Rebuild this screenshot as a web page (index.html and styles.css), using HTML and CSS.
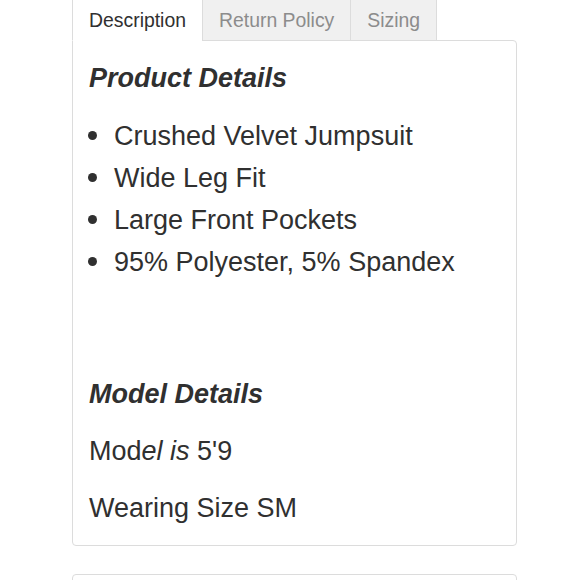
FILE: index.html
```html
<!DOCTYPE html>
<html>
<head>
<meta charset="utf-8">
<link rel="stylesheet" href="styles.css">
</head>
<body>
<div class="wrap">
  <div class="tabs">
    <div class="tab active">Description</div>
    <div class="tab">Return Policy</div>
    <div class="tab last">Sizing</div>
  </div>
  <div class="panel">
    <h2 class="heading">Product Details</h2>
    <ul class="list">
      <li>Crushed Velvet Jumpsuit</li>
      <li>Wide Leg Fit</li>
      <li>Large Front Pockets</li>
      <li>95% Polyester, 5% Spandex</li>
    </ul>
    <h2 class="heading model">Model Details</h2>
    <p class="para">Mod<em>el is</em> 5'9</p>
    <p class="para">Wearing Size SM</p>
  </div>
  <div class="panel next"></div>
</div>
</body>
</html>
```
FILE: styles.css
```css
html, body {
  margin: 0;
  padding: 0;
  background: #fff;
}
body {
  font-family: "Liberation Sans", Arial, Helvetica, sans-serif;
  color: #303030;
  overflow: hidden;
}
.wrap {
  margin-left: 72px;
  width: 445px;
}
.tabs {
  display: flex;
  height: 41px;
}
.tab {
  box-sizing: border-box;
  height: 41px;
  padding: 10px 16px 10px 16px;
  font-size: 19.4px;
  line-height: 20px;
  color: #8c8c8c;
  background: #f0f0f0;
  border-left: 1px solid #dcdcdc;
  border-bottom: 1px solid #dcdcdc;
  position: relative;
  z-index: 1;
}
.tab.last {
  border-right: 1px solid #dcdcdc;
}
.tab.active {
  background: #fff;
  color: #303030;
  border-bottom-color: #fff;
}
.panel {
  margin-top: -1px;
  border: 1px solid #dcdcdc;
  border-radius: 0 4px 4px 4px;
  padding: 21px 16px 21px 16px;
}
.heading {
  margin: 0;
  font-size: 27px;
  line-height: 32px;
  font-weight: bold;
  font-style: italic;
}
.list {
  list-style: none;
  margin: 21px 0 0 0;
  padding: 0;
}
.list li {
  font-size: 27px;
  line-height: 42px;
  padding-left: 25px;
  position: relative;
}
.list li::before {
  content: "";
  position: absolute;
  left: -1px;
  top: 16px;
  width: 9px;
  height: 9px;
  border-radius: 50%;
  background: #303030;
}
.heading.model {
  margin-top: 95px;
}
.para {
  margin: 25px 0 0 0;
  font-size: 27px;
  line-height: 32px;
}
.para em {
  font-style: italic;
}
.panel.next {
  margin-top: 28px;
  border-radius: 4px;
  height: 40px;
  padding: 0;
}
```
